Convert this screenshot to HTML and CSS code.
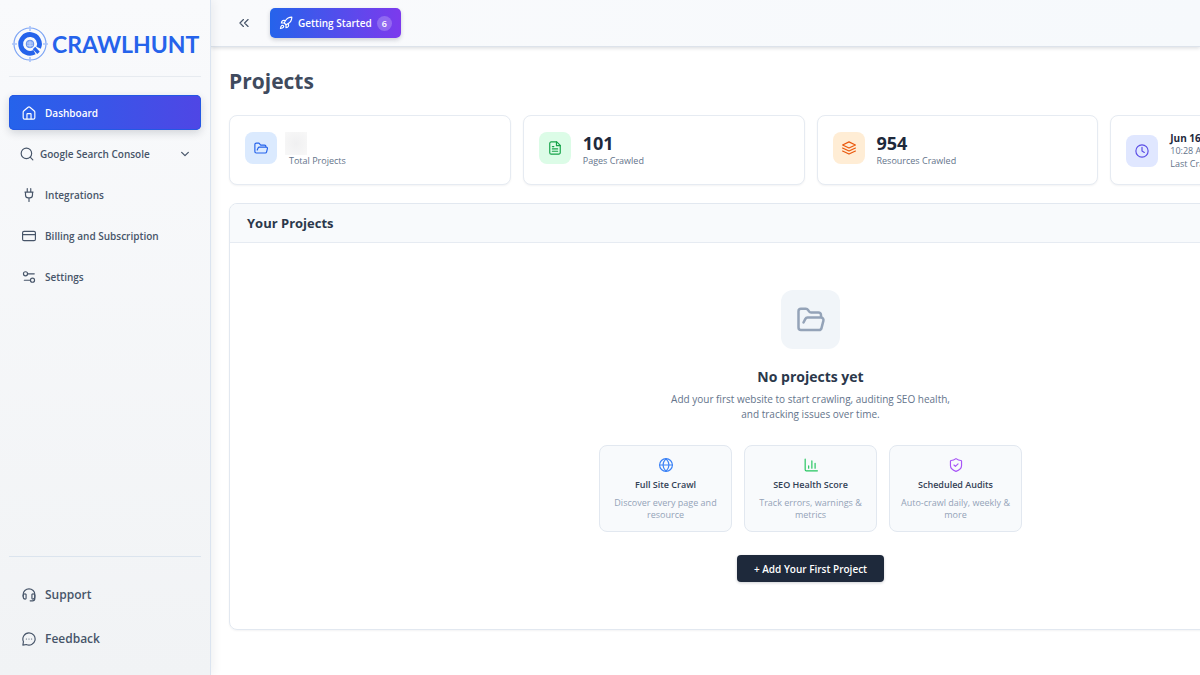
FILE: index.html
```html
<!DOCTYPE html>
<html lang="en">
<head>
<meta charset="utf-8">
<meta name="viewport" content="width=device-width, initial-scale=1">
<title>Projects - Crawlhunt</title>
<link rel="stylesheet" href="styles.css">
</head>
<body>
<div class="app">
  <aside class="sidebar">
    <a class="brand" href="#">
      <svg class="brand-mark" viewBox="0 0 36 36" fill="none" aria-hidden="true">
        <circle cx="18" cy="18" r="16" stroke="#7da5f5" stroke-width="1.2"/>
        <path d="M18 0v5M18 31v5M0 18h5M31 18h5" stroke="#a9c4fa" stroke-width="1.6"/>
        <path d="M22.500 26.200A9.400 9.400 0 1 1 26.600 21.800" stroke="#2563eb" stroke-width="4.800"/>
        <path d="M22 22l4.500 4.800" stroke="#2563eb" stroke-width="3.400"/>
        <circle cx="18" cy="18" r="3.8" fill="#8fb0f6" stroke="#5f8df0"/>
        <path d="M15 17h6M15 19.4h6M18 14.5v7" stroke="#d3e0fc" stroke-width=".6"/>
      </svg>
      <span class="brand-name">CRAWLHUNT</span>
    </a>
    <nav class="nav" aria-label="Main">
      <a class="nav-item active" href="#" aria-current="page">
        <svg class="icon" viewBox="0 0 24 24"><path d="M2 10.500a2.500 2.500 0 0 1 .9-2l7.500-6.400a2.500 2.500 0 0 1 3.200 0l7.500 6.400a2.500 2.500 0 0 1 .9 2V20a2.500 2.500 0 0 1-2.500 2.500h-15A2.500 2.500 0 0 1 2 20z"/><path d="M8.500 22v-8a1 1 0 0 1 1-1h5a1 1 0 0 1 1 1v8"/></svg>
        <span>Dashboard</span>
      </a>
      <button class="nav-item nav-group" type="button" aria-expanded="false">
        <svg class="icon" viewBox="0 0 24 24"><circle cx="11" cy="11" r="9"/><path d="m22 22-4.500-4.500"/></svg>
        <span>Google Search Console</span>
        <svg class="icon icon-chevron" viewBox="0 0 24 24"><path d="m4 8 8 8 8-8"/></svg>
      </button>
      <a class="nav-item" href="#">
        <svg class="icon" viewBox="0 0 24 24"><path d="M12 23v-6M9 7V1M15 7V1M5 7h14M18 7v5a5 5 0 0 1-5 5h-2a5 5 0 0 1-5-5V7"/></svg>
        <span>Integrations</span>
      </a>
      <a class="nav-item" href="#">
        <svg class="icon" viewBox="0 0 24 24"><rect x="1" y="4" width="22" height="16" rx="2.500"/><path d="M1 9.500h22"/></svg>
        <span>Billing and Subscription</span>
      </a>
      <a class="nav-item" href="#">
        <svg class="icon" viewBox="0 0 24 24"><path d="M21 6.500H10M14 17.500H4"/><circle cx="18" cy="17.500" r="3.500"/><circle cx="6" cy="6.500" r="3.500"/></svg>
        <span>Settings</span>
      </a>
    </nav>
    <nav class="nav nav-foot" aria-label="Help">
      <a class="nav-item" href="#">
        <svg class="icon" viewBox="0 0 24 24"><path d="M2 14v-3a10 9.500 0 0 1 20 0v7a4 4 0 0 1-4 4h-4"/><path d="M2 12.500a3 3 0 0 1 5-1.500v6.500a1.500 1.500 0 0 1-1.500 1.500C3 19 2 17 2 14zM22 12.500a3 3 0 0 0-5-1.500v6.500a1.500 1.500 0 0 0 1.500 1.500C21 19 22 17 22 14z"/></svg>
        <span>Support</span>
      </a>
      <a class="nav-item" href="#">
        <svg class="icon" viewBox="0 0 24 24"><path d="M12 1.500A10.500 10.500 0 1 1 7.500 21.500L1.500 22.500 2.500 16.500A10.500 10.500 0 0 1 12 1.500z"/><path d="M7.500 12h.01M12 12h.01M16.500 12h.01"/></svg>
        <span>Feedback</span>
      </a>
    </nav>
  </aside>

  <div class="page">
    <header class="topbar">
      <button class="collapse" type="button" aria-label="Collapse sidebar">
        <svg class="icon" viewBox="0 0 24 24"><path d="m11 18-6-6 6-6M19 18l-6-6 6-6"/></svg>
      </button>
      <button class="getting-started" type="button">
        <svg class="icon" viewBox="0 0 24 24"><path d="M4.500 16.500c-1.500 1.260-2 5-2 5s3.740-.5 5-2c.71-.84.7-2.130-.09-2.910a2.180 2.180 0 0 0-2.910-.09z"/><path d="m12 15-3-3a22 22 0 0 1 2-3.950A12.880 12.880 0 0 1 22 2c0 2.720-.78 7.500-6 11a22.350 22.350 0 0 1-4 2z"/><path d="M9 12H4s.55-3.030 2-4c1.620-1.080 5 0 5 0M12 15v5s3.030-.55 4-2c1.080-1.620 0-5 0-5"/></svg>
        <span>Getting Started</span>
        <span class="count">6</span>
      </button>
    </header>

    <main class="content">
      <h1 class="page-title">Projects</h1>

      <section class="stats" aria-label="Statistics">
        <article class="stat">
          <div class="stat-icon blue"><svg class="icon" viewBox="0 0 24 24"><path d="M5.500 15.500 7 12a2.500 2.500 0 0 1 2.300-1.500H21a2 2 0 0 1 2 2.500l-1.500 6a2.200 2.200 0 0 1-2 1.500H4A2.500 2.500 0 0 1 1.500 18V6A2.500 2.500 0 0 1 4 3.500h4.500L11.500 7H18a2.500 2.500 0 0 1 2.500 2.500v1"/></svg></div>
          <div class="stat-text"><div class="stat-hidden"></div><p class="stat-label">Total Projects</p></div>
        </article>
        <article class="stat">
          <div class="stat-icon green"><svg class="icon" viewBox="0 0 24 24"><path d="M15 1.500H5.500A2.500 2.500 0 0 0 3 4v16a2.500 2.500 0 0 0 2.500 2.500h13A2.500 2.500 0 0 0 21 20V7.500z"/><path d="M14.500 1.500V8H21M10 9.500H7.500M16.500 13.500h-9M16.500 17.500h-9"/></svg></div>
          <div class="stat-text"><p class="stat-value">101</p><p class="stat-label">Pages Crawled</p></div>
        </article>
        <article class="stat">
          <div class="stat-icon orange"><svg class="icon" viewBox="0 0 24 24"><path d="m12 1.500 11 5.200-11 5.200L1 6.700z"/><path d="m1 12 11 5.200L23 12M1 17.200l11 5.200 11-5.200"/></svg></div>
          <div class="stat-text"><p class="stat-value">954</p><p class="stat-label">Resources Crawled</p></div>
        </article>
        <article class="stat stat-crawl">
          <div class="stat-icon indigo"><svg class="icon" viewBox="0 0 24 24"><circle cx="12" cy="12" r="10.500"/><path d="M12 5.500V12l4 2.500"/></svg></div>
          <div class="stat-text"><p class="stat-date">Jun 16</p><p class="stat-label">10:28 AM</p><p class="stat-label">Last Crawl</p></div>
        </article>
      </section>

      <section class="panel">
        <h2 class="panel-title">Your Projects</h2>
        <div class="empty">
          <div class="empty-icon"><svg class="icon" viewBox="0 0 24 24"><path d="m6 14 1.500-2.900A2 2 0 0 1 9.240 10H20a2 2 0 0 1 1.940 2.500l-1.540 6a2 2 0 0 1-1.950 1.500H4a2 2 0 0 1-2-2V5a2 2 0 0 1 2-2h3.900a2 2 0 0 1 1.690.9l.81 1.200a2 2 0 0 0 1.670.9H18a2 2 0 0 1 2 2v2"/></svg></div>
          <h3 class="empty-title">No projects yet</h3>
          <p class="empty-text">Add your first website to start crawling, auditing SEO health, and tracking issues over time.</p>
          <div class="features">
            <article class="feature">
              <svg class="icon c-blue" viewBox="0 0 24 24"><circle cx="12" cy="12" r="11"/><path d="M12 1c-6.500 7-6.500 15 0 22 6.500-7 6.500-15 0-22M1 12h22"/></svg>
              <h4 class="feature-title">Full Site Crawl</h4>
              <p class="feature-text">Discover every page and resource</p>
            </article>
            <article class="feature">
              <svg class="icon c-green" viewBox="0 0 24 24"><path d="M2 2v18a2 2 0 0 0 2 2h19M8 17.500v-4M13.500 17.500V5M19 17.500V9"/></svg>
              <h4 class="feature-title">SEO Health Score</h4>
              <p class="feature-text">Track errors, warnings &amp; metrics</p>
            </article>
            <article class="feature">
              <svg class="icon c-purple" viewBox="0 0 24 24"><path d="M21.500 13c0 5.500-3.500 8-9.500 10-6-2-9.500-4.500-9.500-10V5.500a1.200 1.200 0 0 1 1.200-1.200C6.500 4.300 9.500 3 11.200 1.500a1.300 1.300 0 0 1 1.600 0C14.500 3 17.500 4.300 20.300 4.300a1.200 1.200 0 0 1 1.200 1.200z"/><path d="m8.500 12 2.500 2.500L15.500 10"/></svg>
              <h4 class="feature-title">Scheduled Audits</h4>
              <p class="feature-text">Auto-crawl daily, weekly &amp; more</p>
            </article>
          </div>
          <button class="add" type="button">+ Add Your First Project</button>
        </div>
      </section>
    </main>
  </div>
</div>
</body>
</html>
```
FILE: styles.css
```css
* { box-sizing: border-box; }

body {
  margin: 0;
  font-family: "Open Sans", "Noto Sans", sans-serif;
  color: #334155;
  background: #fff;
  overflow-x: hidden;
}

h1, h2, h3, h4, p { margin: 0; }
a { color: inherit; text-decoration: none; }
button { font: inherit; color: inherit; border: 0; background: none; padding: 0; cursor: pointer; }

.icon {
  width: 14px;
  height: 14px;
  flex: none;
  fill: none;
  stroke: currentColor;
  stroke-width: 2;
  stroke-linecap: round;
  stroke-linejoin: round;
}

.app { display: flex; min-height: 100vh; }

.sidebar {
  flex: none;
  width: 211px;
  padding: 0 9px;
  display: flex;
  flex-direction: column;
  background: linear-gradient(#f9fafc, #f1f3f5);
  border-right: 1px solid #dbe4f0;
  box-shadow: 2px 0 10px rgba(15, 23, 42, 0.07);
  z-index: 1;
}

.brand {
  display: flex;
  align-items: center;
  gap: 4px;
  height: 77px;
  padding: 12px 3px 0;
  border-bottom: 1px solid #e7ebf0;
}
.brand-mark { width: 36px; height: 36px; flex: none; }
.brand-name {
  font-family: Lato, sans-serif;
  font-size: 23px;
  font-weight: 700;
  color: #2563eb;
}

.nav { display: flex; flex-direction: column; gap: 6px; padding-top: 18px; }

.nav-item {
  display: flex;
  align-items: center;
  gap: 9px;
  height: 35px;
  padding: 0 13px;
  border-radius: 5px;
  font-size: 10px;
  font-weight: 600;
  text-align: left;
  white-space: nowrap;
  color: #475569;
}
.nav-item.active {
  color: #fff;
  background: linear-gradient(90deg, #2563eb, #4f46e5);
  box-shadow: 0 3px 8px rgba(15, 23, 42, 0.16), inset 0 0 0 1px #2458e4;
}
.nav-group { gap: 6px; padding: 0 11px; }
.nav-group .icon-chevron { width: 10px; height: 10px; margin-left: auto; stroke-width: 3; }

.nav-foot {
  margin-top: auto;
  padding: 20px 0 19px;
  gap: 9px;
  border-top: 1px solid #dbe4ee;
}
.nav-foot .nav-item { font-size: 12px; }

.page { flex: 1; min-width: 0; }

.topbar {
  display: flex;
  align-items: center;
  gap: 19px;
  height: 47px;
  padding: 0 26px;
  background: linear-gradient(90deg, #f9fafc, #f6f9fc);
  border-bottom: 1px solid #dde3eb;
  box-shadow: 0 1px 4px rgba(15, 23, 42, 0.16);
}
.collapse { display: flex; color: #475569; }

.getting-started {
  display: flex;
  align-items: center;
  gap: 5px;
  height: 30px;
  padding: 0 9px;
  border-radius: 5px;
  font-size: 10px;
  font-weight: 600;
  color: #fff;
  background: linear-gradient(90deg, #2563eb, #7c3aed);
  box-shadow: 0 2px 4px rgba(15, 23, 42, 0.18);
}
.count {
  width: 15px;
  border-radius: 8px;
  font-size: 9px;
  line-height: 15px;
  text-align: center;
  background: rgba(255, 255, 255, 0.22);
}

.content { min-width: 1199px; padding: 20px 18px; }

.page-title {
  margin-bottom: 19px;
  font-size: 21px;
  line-height: 29px;
  font-weight: 700;
  color: #3f4b5e;
}

.stats {
  display: grid;
  grid-template-columns: repeat(4, 1fr);
  gap: 12px;
  margin-bottom: 18px;
}
.stat {
  display: flex;
  align-items: flex-start;
  gap: 12px;
  padding: 16px 15px 14px;
  border: 1px solid #e6ebf2;
  border-radius: 8px;
  background: #fff;
  box-shadow: 0 1px 2px rgba(15, 23, 42, 0.05);
}
.stat-crawl { align-items: center; }
.stat-icon {
  display: grid;
  place-items: center;
  width: 32px;
  height: 32px;
  border-radius: 8px;
}
.blue { color: #2563eb; background: #dbeafe; }
.green { color: #16a34a; background: #dcfce7; }
.orange { color: #ea580c; background: #ffedd5; }
.indigo { color: #5b4ee6; background: #e0e7ff; }

.stat-value { font-size: 18px; line-height: 23px; font-weight: 700; color: #1e293b; }
.stat-label { font-size: 9px; line-height: 12px; color: #64748b; }
.stat-date { font-size: 10px; line-height: 12px; font-weight: 700; color: #1e293b; }
.stat-crawl .stat-text { display: grid; gap: 1px; }
.stat-hidden {
  width: 22px;
  height: 23px;
  margin-left: -4px;
  background: radial-gradient(#f0f0f1, #f8f8f8);
}

.panel {
  border: 1px solid #e2e8f0;
  border-radius: 8px;
  overflow: hidden;
  box-shadow: 0 1px 2px rgba(15, 23, 42, 0.05);
}
.panel-title {
  padding: 9px 17px;
  font-size: 13px;
  line-height: 20px;
  font-weight: 700;
  color: #2b384b;
  background: #f8fafc;
  border-bottom: 1px solid #e6ebf2;
}

.empty {
  display: flex;
  flex-direction: column;
  align-items: center;
  padding: 47px 18px;
  text-align: center;
}
.empty-icon {
  display: grid;
  place-items: center;
  width: 59px;
  height: 59px;
  margin-bottom: 18px;
  border-radius: 12px;
  color: #94a3b8;
  background: #f1f5f9;
}
.empty-icon .icon { width: 30px; height: 30px; }
.empty-title { margin-bottom: 5px; font-size: 14px; line-height: 20px; font-weight: 700; color: #2b384b; }
.empty-text { max-width: 290px; margin-bottom: 23px; font-size: 10px; line-height: 15px; color: #64748b; }

.features {
  display: grid;
  grid-template-columns: repeat(3, 1fr);
  gap: 12px;
  width: 100%;
  max-width: 423px;
  margin-bottom: 23px;
}
.feature {
  display: flex;
  flex-direction: column;
  align-items: center;
  padding: 12px 11px 10px;
  border: 1px solid #e2e8f0;
  border-radius: 8px;
  background: #f8fafc;
}
.feature-title { margin: 7px 0 6px; font-size: 9px; line-height: 12px; font-weight: 600; color: #334155; }
.feature-text { font-size: 9px; line-height: 12px; color: #94a3b8; }
.c-blue { color: #3b82f6; }
.c-green { color: #22c55e; }
.c-purple { color: #a855f7; }

.add {
  height: 27px;
  padding: 0 17px;
  border-radius: 4px;
  font-size: 10px;
  font-weight: 600;
  color: #fff;
  background: #1e293b;
  box-shadow: 0 1px 3px rgba(15, 23, 42, 0.2);
}
```
